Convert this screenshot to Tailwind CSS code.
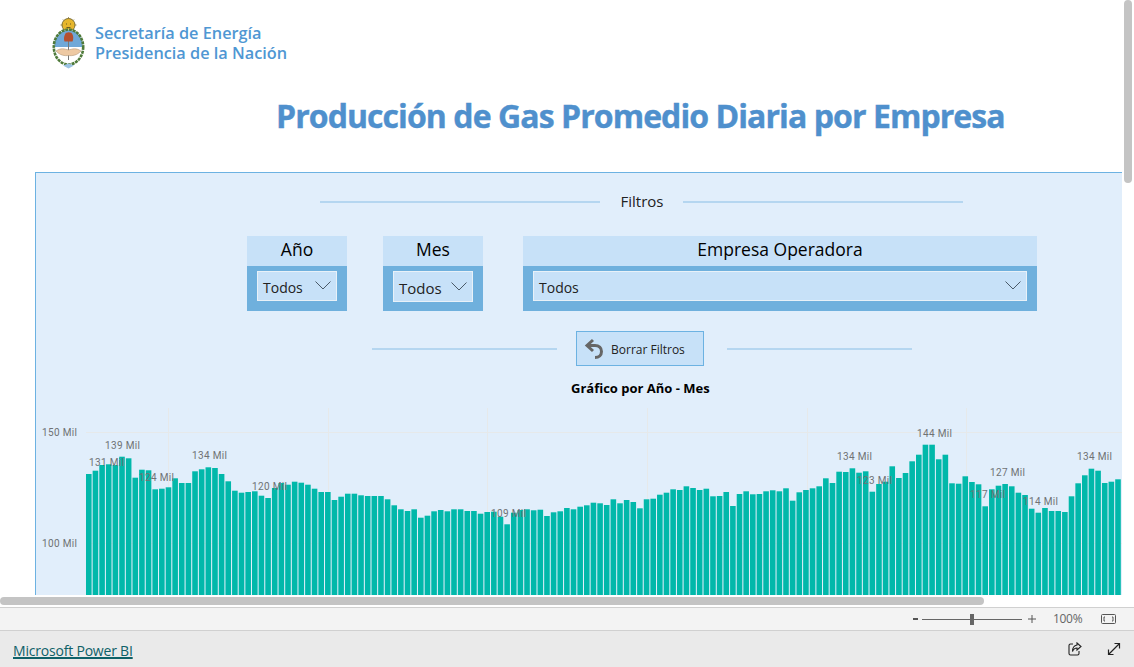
<!DOCTYPE html>
<html lang="es">
<head>
    <meta charset="UTF-8">
    <title>Producción de Gas Promedio Diaria por Empresa</title>
    <script src="https://cdn.jsdelivr.net/npm/@tailwindcss/browser@4"></script>
</head>
<body class="w-[1134px] h-[667px] overflow-hidden bg-white relative font-['Open_Sans',sans-serif] text-black">
    <!-- report area -->
    <div class="h-[607px] overflow-hidden">
        <header class="h-[172px]">
            <div class="flex items-center pl-[52px] pt-[17px] gap-[10px]">
                <svg width="33" height="52" viewBox="0 0 33 52">
                    <g stroke="#8a7a3a" stroke-width=".8"><path d="M16.500 0V16M8.500 8H24.500M11 2.500 22 13.500M22 2.500 11 13.500"/></g>
                    <circle cx="16.500" cy="8" r="6.500" fill="#e6b62c" stroke="#7d6f35" stroke-width="1"/>
                    <path d="M14 7h1M18 7h1M14.500 10.500h4" stroke="#6b5a20" stroke-width="1"/>
                    <ellipse cx="16.500" cy="30" rx="14.700" ry="17.500" fill="#fff"/>
                    <path d="M2.500 30 V28 C2.500 19 9 13 16.500 13 C24 13 30.500 19 30.500 28 V30 Z" fill="#6fa8d8"/>
                    <ellipse cx="16.500" cy="30" rx="14.700" ry="17.500" fill="none" stroke="#4f7a3a" stroke-width="2.600" stroke-dasharray="3 .8"/>
                    <path d="M16.500 22 V43" stroke="#777" stroke-width="1"/>
                    <path d="M13 17.500 C13.500 14.500 20 14.500 20.500 17.500 C21.500 19.500 21.500 22 20.500 24.500 H12.500 C11.500 22 12 19.500 13 17.500 Z" fill="#b5502f"/>
                    <path d="M4 34 C9 30.500 13 32 16.500 33 C20 32 24 30.500 29 34 C25 38.500 20 39 16.500 38.500 C13 39 8 38.500 4 34 Z" fill="#eec9a3" stroke="#a98a6a" stroke-width=".5"/>
                    <path d="M11 48.500 L16.500 51.500 L22 48.500 L16.500 46.500 Z" fill="#9cc3e3"/>
                </svg>
                <div class="text-[#4f97d3] text-[16.300px] leading-[20px] font-semibold whitespace-nowrap -mt-[1px]">
                    <div>Secretaría de Energía</div>
                    <div>Presidencia de la Nación</div>
                </div>
            </div>
            <h1 class="pl-[276px] mt-[25px] text-[32px] leading-[44px] font-bold text-[#4f90cd] tracking-[-0.93px] [-webkit-text-stroke:0.4px_#4f90cd] whitespace-nowrap">Producción de Gas Promedio Diaria por Empresa</h1>
        </header>

        <section class="ml-[35px] w-[1087px] h-[423px] border-t border-l border-[#6cb2e2] bg-[#e1eefb]">
            <div class="h-[58px] flex items-center pl-[284px]">
                <div class="w-[280px] h-[2px] bg-[#b5d6f0]"></div>
                <div class="w-[83px] pl-[1px] text-center text-[15px] leading-[20px] text-[#222] -mt-[2px]">Filtros</div>
                <div class="w-[280px] h-[2px] bg-[#b5d6f0]"></div>
            </div>

            <div class="mt-[5px] h-[75px] flex pl-[211px]">
                <div class="w-[100px] flex flex-col">
                    <div class="h-[30px] pb-[3px] bg-[#c7e1f8] flex items-center justify-center text-[17.5px]">Año</div>
                    <div class="h-[45px] bg-[#6fb0dd] px-[10px] pt-[5px]">
                        <div class="h-[30px] pt-[2px] bg-[#c7e1f8] border border-[#e8f1f8] flex items-center justify-between pl-[5px] pr-[5px] text-[14px] text-[#222]">
                            <span>Todos</span>
                            <svg class="-mt-[3px]" width="16" height="9" viewBox="0 0 16 9" fill="none" stroke="#4a5a68" stroke-width="1"><path d="M.5.5 8 8 15.500.5"/></svg>
                        </div>
                    </div>
                </div>
                <div class="w-[100px] ml-[36px] flex flex-col">
                    <div class="h-[30px] pb-[3px] bg-[#c7e1f8] flex items-center justify-center text-[17.5px]">Mes</div>
                    <div class="h-[45px] bg-[#6fb0dd] px-[10px] pt-[5px]">
                        <div class="h-[31px] pt-[3px] bg-[#c7e1f8] border border-[#e8f1f8] flex items-center justify-between pl-[5px] pr-[5px] text-[15px] text-[#222]">
                            <span>Todos</span>
                            <svg class="-mt-[4px]" width="16" height="9" viewBox="0 0 16 9" fill="none" stroke="#4a5a68" stroke-width="1"><path d="M.5.5 8 8 15.500.5"/></svg>
                        </div>
                    </div>
                </div>
                <div class="w-[514px] ml-[40px] flex flex-col">
                    <div class="h-[30px] pb-[3px] bg-[#c7e1f8] flex items-center justify-center text-[17.5px]">Empresa Operadora</div>
                    <div class="h-[45px] bg-[#6fb0dd] px-[10px] pt-[5px]">
                        <div class="h-[30px] pt-[2px] bg-[#c7e1f8] border border-[#e8f1f8] flex items-center justify-between pl-[5px] pr-[5px] text-[14px] text-[#222]">
                            <span>Todos</span>
                            <svg class="-mt-[3px]" width="16" height="9" viewBox="0 0 16 9" fill="none" stroke="#4a5a68" stroke-width="1"><path d="M.5.5 8 8 15.500.5"/></svg>
                        </div>
                    </div>
                </div>
            </div>

            <div class="mt-[20px] h-[35px] flex items-center pl-[336px]">
                <div class="w-[185px] h-[2px] bg-[#b5d6f0]"></div>
                <button class="ml-[19px] w-[128px] h-[35px] bg-[#c7e1f8] border border-[#6cb2e2] flex items-center pl-[7px] gap-[7px] text-[12px] text-[#222]">
                    <svg width="20" height="21" viewBox="0 0 20 21" fill="none" stroke="#666" stroke-width="3"><path d="M9 2 3 7.500 9 13M3.500 7.500H11C15 7.500 17.500 10 17.500 13.500S15 19.500 11 19.500"/></svg>
                    <span class="mt-[2px]">Borrar Filtros</span>
                </button>
                <div class="ml-[23px] w-[185px] h-[2px] bg-[#b5d6f0]"></div>
            </div>

            <h2 class="mt-[14px] h-[16px] pl-[535px] text-[13px] leading-[16px] font-bold whitespace-nowrap">Gráfico por Año - Mes</h2>

            <svg class="mt-[12px] block font-['Roboto',sans-serif] text-[10px]" width="1086" height="187" viewBox="36 408 1086 187">
                <g stroke="#e6e9ea" stroke-width="1">
                    <path d="M86 432.500H1122M86 543.500H1122"/>
                    <path d="M168.500 408V595M328.500 408V595M487.500 408V595M647.500 408V595M807.500 408V595M966.500 408V595"/>
                </g>
                <g id="bars" class="fill-[#01b8aa]"></g>
                <g class="fill-[#6f7274] tracking-[0.35px]">
                    <text x="42" y="436">150 Mil</text>
                    <text x="42" y="547">100 Mil</text>
                    <text x="89" y="466">131 Mil</text>
                    <text x="105" y="449">139 Mil</text>
                    <text x="139" y="481">124 Mil</text>
                    <text x="192" y="459">134 Mil</text>
                    <text x="252" y="490">120 Mil</text>
                    <text x="491" y="517">109 Mil</text>
                    <text x="837" y="460">134 Mil</text>
                    <text x="857" y="484">123 Mil</text>
                    <text x="917" y="437">144 Mil</text>
                    <text x="990" y="476">127 Mil</text>
                    <text x="970" y="498">117 Mil</text>
                    <text x="1023" y="505">114 Mil</text>
                    <text x="1077" y="460">134 Mil</text>
                </g>
            </svg>
        </section>
    </div>

    <!-- scrollbars -->
    <div class="absolute left-[1124px] top-0 w-[8px] h-[183px] rounded-[4px] bg-[#c4c4c4]"></div>
    <div class="absolute left-0 top-[597px] w-[984px] h-[8px] rounded-[4px] bg-[#c4c4c4]"></div>

    <!-- zoom bar -->
    <div class="h-[24px] bg-[#f3f3f3] border-t border-b border-[#d0d0d0] flex items-center text-[#666]">
        <span class="ml-[913px] w-[5px] h-[2px] bg-[#555]"></span>
        <div class="ml-[4px] w-[100px] h-[1px] bg-[#666] relative">
            <div class="absolute left-[48px] -top-[5px] w-[4px] h-[11px] bg-[#666]"></div>
        </div>
        <svg class="ml-[6px]" width="8" height="8" viewBox="0 0 8 8" stroke="#555" stroke-width="1"><path d="M0 4H8M4 0V8"/></svg>
        <span class="ml-[17px] w-[29px] text-[12px] tracking-[-0.3px] whitespace-nowrap">100%</span>
        <svg class="ml-[19px]" width="15" height="10" viewBox="0 0 15 10" fill="none" stroke="#555" stroke-width="1"><rect x=".5" y=".5" width="14" height="9" rx="1"/><path d="M4 3H3V7H4M11 3H12V7H11"/></svg>
    </div>

    <!-- footer -->
    <footer class="h-[36px] bg-[#eaeaea] flex items-center pl-[13px]">
        <a href="#" class="text-[14px] text-[#0e6168] underline decoration-[1.500px] font-medium tracking-[-0.2px] mt-[3px]">Microsoft Power BI</a>
        <svg class="ml-[935px]" width="14" height="14" viewBox="0 0 14 14" fill="none" stroke="#222" stroke-width="1.100"><path d="M5 2H2.500C1.500 2 1 2.500 1 3.500V11.500C1 12.500 1.500 13 2.500 13H9.500C10.500 13 11 12.500 11 11.500V9"/><path d="M9 1 13 4.500 9 8V6C7 6 5.500 7 4.500 9.500 4.500 6 6 3.500 9 3Z"/></svg>
        <svg class="ml-[25px]" width="14" height="14" viewBox="0 0 14 14" fill="none" stroke="#222" stroke-width="1.200"><path d="M1.500 12.500 12.500 1.500M7.500 1.500H12.500V6.500M1.500 7.500V12.500H6.500"/></svg>
    </footer>

    <script>
        // bar tops read off the reference, 156 months
        const tops = [474,470.7,465,464.3,465,456.7,458.3,477.7,469.7,470.3,489.3,488.7,487.3,478.3,483,483,471.3,469.3,467.3,468,474,481.3,490.7,492.7,492,491.3,495.7,498,488,483,484.7,481.7,482.7,484.7,488.7,492,492,500,496.7,493.7,493.7,495.3,496,496,496,499.3,505.3,509.3,
            511,509.3,517.7,515.7,511.3,510,511.3,509.3,509.3,511,511,513.7,512,511.7,516.7,524.3,512.7,510,509.3,510.3,509.7,516,512.3,511.3,508,509.3,506.7,505.3,502.7,503.3,505,499.3,503.3,500,502,508.3,499.3,498.7,494.7,492.7,489.3,490,486.3,488,490,488.7,496.3,496,492,506,494,491.3,494.3,494,491.3,
            490.3,491.3,488.3,500.7,492.3,490,488.3,486.3,478.3,483,471.7,472,468.3,472.7,471.3,491.7,484,481.7,466.3,478,473,461.3,454.7,444.7,444.7,459.3,454.7,483.3,483.7,476.3,482,484.3,506.3,489.3,485.7,484,486.3,492.7,495,508.7,512.7,508,511,511,512,496.3,483.3,475.3,468.7,470.7,483,481.7,479.3];
        const barsGroup = document.getElementById('bars');
        tops.forEach((top, i) => {
            const rect = document.createElementNS('http://www.w3.org/2000/svg', 'rect');
            rect.setAttribute('x', 86 + i * 6.64);
            rect.setAttribute('y', top);
            rect.setAttribute('width', 5.6);
            rect.setAttribute('height', 595 - top);
            barsGroup.appendChild(rect);
        });
    </script>
</body>
</html>
